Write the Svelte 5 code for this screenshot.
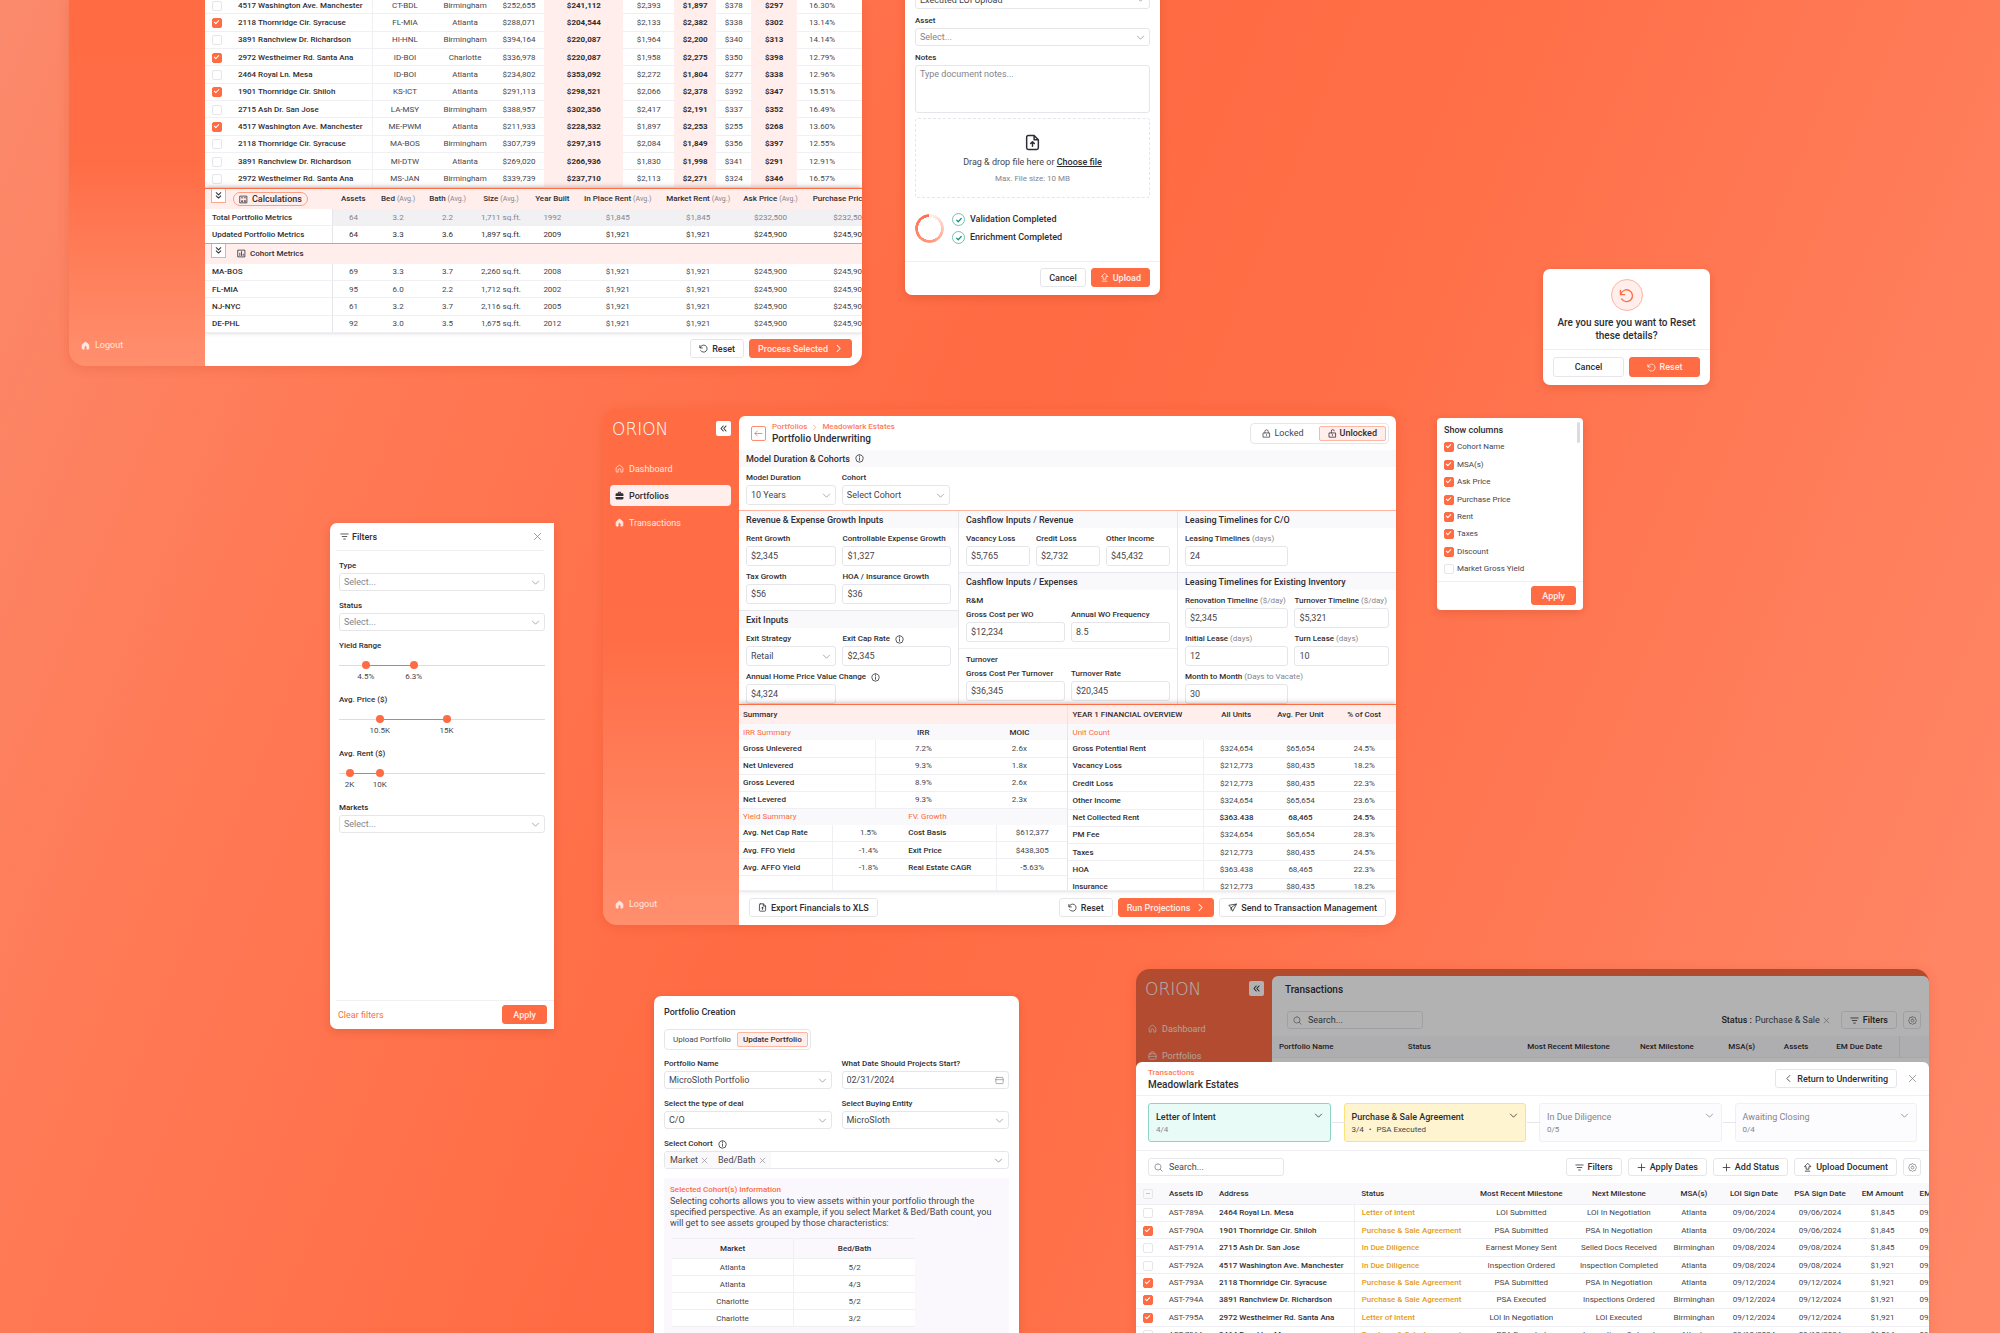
<script lang="ts">
  type Field = { label: string; value: string; hint?: string; select?: boolean; info?: boolean };

  const icons: Record<string, string> = {
    down: 'M2.5 5.5l5.5 5.5 5.5-5.5',
    right: 'M5.5 2.5L11 8l-5.5 5.5',
    left: 'M10.5 2.5L5 8l5.5 5.5',
    close: 'M2.5 2.5l11 11M13.5 2.5l-11 11',
    plus: 'M8 2v12M2 8h12',
    back: 'M14 8H2M6 3.5L1.5 8 6 12.5',
    reset: 'M1.5 2.5v4.5h4.5M2 6.5a6.3 6.3 0 1 1 .8 5.2',
    doubleDown: 'M4 3l4 4 4-4M4 8.5l4 4 4-4',
    doubleLeft: 'M7.5 3.5l-4 4.5 4 4.5M12.500 3.5l-4 4.5 4 4.5',
    filter: 'M1.5 3.5h13M4 8h8M6.5 12.5h3',
    info: 'M8 1.5a6.5 6.5 0 1 0 0 13a6.5 6.5 0 1 0 0-13M8 7.2v4M8 4.5v.6',
    lock: 'M2.5 7h11v7.5h-11zM5 7V4.5a3 3 0 0 1 6 0V7M8 10v1.5',
    unlock: 'M2.5 7h11v7.5h-11zM6 7V4a2.5 2.5 0 0 1 5-.8M8 10v1.5',
    home: 'M2 7.5Q2 6.5 3 5.8L7 2.5q1-.8 2 0l4 3.3q1 .7 1 1.7v5.5q0 1.5-1.5 1.5H10.5V11a2.5 2.5 0 0 0-5 0v3.5h-2Q2 14.5 2 13z',
    briefcase: 'M3 5h10q1.5 0 1.5 1.5V13q0 1.5-1.5 1.5H3q-1.5 0-1.5-1.5V6.5Q1.5 5 3 5zM5 5V3q0-1.5 1.5-1.5h3Q11 1.5 11 3v2M1.5 9.5h13',
    briefcaseSolid: 'M5 4V3q0-1.500 1.500-1.500h3Q11 1.500 11 3v1h2q2 0 2 2v3H1V6q0-2 2-2zM6.500 4h3V3h-3zM1 10.500h14V13q0 2-2 2H3q-2 0-2-2z',
    upload: 'M8 1L2.5 6.5h3V11h5V6.5h3zM4 14.5h8',
    file: 'M4 1.5h5.5L13.5 5.5V13q0 1.5-1.5 1.5H4q-1.5 0-1.5-1.5V3q0-1.5 1.5-1.5zM9.5 1.5v4h4M8 11.5V7.5M6.3 9L8 7.3 9.7 9',
    send: 'M14.5 2L1.5 4l4 4.5 2.5 5.5zM14.5 2l-9 6.500M5.5 8.5v4',
    calculator: 'M2 2h12v12H2zM4.5 5h2M9.500 5h2M4.500 11h2M5.500 10v2M9.500 10.200h2M9.500 12h2',
    chart: 'M2 2h12v12H2zM5 11.5V7.5M8 11.5V4.5M11 11.5V9',
    calendar: 'M3.5 2.5h9Q14.5 2.5 14.5 4.5v7q0 2-2 2h-9q-2 0-2-2v-7q0-2 2-2zM1.5 6.5h13',
    gear: 'M8 1l2 1.500 2.700 0 .8 2.500L15 8l-1.500 3-.8 2.500-2.700 0L8 15l-2-1.500-2.700 0-.8-2.500L1 8l1.500-3 .8-2.500 2.700 0zM8 5.500a2.500 2.500 0 1 0 0 5a2.500 2.500 0 1 0 0-5',
    search: 'M7 1.5a5.5 5.5 0 1 0 0 11a5.5 5.5 0 1 0 0-11M11 11l3.5 3.5',
    check: 'M3.5 8.5l3 3 6-6.5'
  };

  const assets = [
    ['4517 Washington Ave. Manchester', 'CT-BDL', 'Birmingham', '$252,655', '$241,112', '$2,393', '$1,897', '$378', '$297', '16.30%'],
    ['2118 Thornridge Cir. Syracuse', 'FL-MIA', 'Atlanta', '$288,071', '$204,544', '$2,133', '$2,382', '$338', '$302', '13.14%'],
    ['3891 Ranchview Dr. Richardson', 'HI-HNL', 'Birmingham', '$394,164', '$220,087', '$1,964', '$2,200', '$340', '$313', '14.14%'],
    ['2972 Westheimer Rd. Santa Ana', 'ID-BOI', 'Charlotte', '$336,978', '$220,087', '$1,958', '$2,275', '$350', '$398', '12.79%'],
    ['2464 Royal Ln. Mesa', 'ID-BOI', 'Atlanta', '$234,802', '$353,092', '$2,272', '$1,804', '$277', '$338', '12.96%'],
    ['1901 Thornridge Cir. Shiloh', 'KS-ICT', 'Atlanta', '$291,113', '$298,521', '$2,066', '$2,378', '$392', '$347', '15.51%'],
    ['2715 Ash Dr. San Jose', 'LA-MSY', 'Birmingham', '$388,957', '$302,356', '$2,417', '$2,191', '$337', '$352', '16.49%'],
    ['4517 Washington Ave. Manchester', 'ME-PWM', 'Atlanta', '$211,933', '$228,532', '$1,897', '$2,253', '$255', '$268', '13.60%'],
    ['2118 Thornridge Cir. Syracuse', 'MA-BOS', 'Birmingham', '$307,739', '$297,315', '$2,084', '$1,849', '$356', '$397', '12.55%'],
    ['3891 Ranchview Dr. Richardson', 'MI-DTW', 'Atlanta', '$269,020', '$266,936', '$1,830', '$1,998', '$341', '$291', '12.91%'],
    ['2972 Westheimer Rd. Santa Ana', 'MS-JAN', 'Birmingham', '$339,739', '$237,710', '$2,113', '$2,271', '$324', '$346', '16.57%']
  ];
  const selectedAssets = [1, 3, 5, 7];

  const metricColumns = [
    ['Assets', ''],
    ['Bed', '(Avg.)'],
    ['Bath', '(Avg.)'],
    ['Size', '(Avg.)'],
    ['Year Built', ''],
    ['In Place Rent', '(Avg.)'],
    ['Market Rent', '(Avg.)'],
    ['Ask Price', '(Avg.)'],
    ['Purchase Price', '(Avg.)']
  ];
  const cohortMetrics = [
    ['MA-BOS', '69', '3.3', '3.7', '2,260 sq.ft.', '2008', '$1,921', '$1,921', '$245,900', '$245,900'],
    ['FL-MIA', '95', '6.0', '2.2', '1,712 sq.ft.', '2002', '$1,921', '$1,921', '$245,900', '$245,900'],
    ['NJ-NYC', '61', '3.2', '3.7', '2,116 sq.ft.', '2005', '$1,921', '$1,921', '$245,900', '$245,900'],
    ['DE-PHL', '92', '3.0', '3.5', '1,675 sq.ft.', '2012', '$1,921', '$1,921', '$245,900', '$245,900']
  ];
  const totalMetrics = ['64', '3.2', '2.2', '1,711 sq.ft.', '1992', '$1,845', '$1,845', '$232,500', '$232,500'];
  const updatedMetrics = ['64', '3.3', '3.6', '1,897 sq.ft.', '2009', '$1,921', '$1,921', '$245,900', '$245,900'];

  const columnOptions = ['Cohort Name', 'MSA(s)', 'Ask Price', 'Purchase Price', 'Rent', 'Taxes', 'Discount', 'Market Gross Yield'];

  const ranges = [
    { label: 'Yield Range', from: 11.5, to: 35.7, fromLabel: '4.5%', toLabel: '6.3%' },
    { label: 'Avg. Price ($)', from: 18.6, to: 52.3, fromLabel: '10.5K', toLabel: '15K' },
    { label: 'Avg. Rent ($)', from: 3.3, to: 18.6, fromLabel: '2K', toLabel: '10K' }
  ];

  const growthFields: Field[] = [
    { label: 'Rent Growth', value: '$2,345' },
    { label: 'Controllable Expense Growth', value: '$1,327' },
    { label: 'Tax Growth', value: '$56' },
    { label: 'HOA / Insurance Growth', value: '$36' }
  ];
  const exitFields: Field[] = [
    { label: 'Exit Strategy', value: 'Retail', select: true },
    { label: 'Exit Cap Rate', value: '$2,345', info: true },
    { label: 'Annual Home Price Value Change', value: '$4,324', info: true }
  ];
  const revenueFields: Field[] = [
    { label: 'Vacancy Loss', value: '$5,765' },
    { label: 'Credit Loss', value: '$2,732' },
    { label: 'Other Income', value: '$45,432' }
  ];
  const rmFields: Field[] = [
    { label: 'Gross Cost per WO', value: '$12,234' },
    { label: 'Annual WO Frequency', value: '8.5' }
  ];
  const turnoverFields: Field[] = [
    { label: 'Gross Cost Per Turnover', value: '$36,345' },
    { label: 'Turnover Rate', value: '$20,345' }
  ];
  const inventoryFields: Field[] = [
    { label: 'Renovation Timeline', hint: '($/day)', value: '$2,345' },
    { label: 'Turnover Timeline', hint: '($/day)', value: '$5,321' },
    { label: 'Initial Lease', hint: '(days)', value: '12' },
    { label: 'Turn Lease', hint: '(days)', value: '10' },
    { label: 'Month to Month', hint: '(Days to Vacate)', value: '30' }
  ];

  const irrRows = [
    ['Gross Unlevered', '7.2%', '2.6x'],
    ['Net Unlevered', '9.3%', '1.8x'],
    ['Gross Levered', '8.9%', '2.6x'],
    ['Net Levered', '9.3%', '2.3x']
  ];
  const yieldRows = [
    ['Avg. Net Cap Rate', '1.5%', 'Cost Basis', '$612,377'],
    ['Avg. FFO Yield', '-1.4%', 'Exit Price', '$438,305'],
    ['Avg. AFFO Yield', '-1.8%', 'Real Estate CAGR', '-5.63%'],
    ['', '', '', '']
  ];
  const financials = [
    ['Gross Potential Rent', '$324,654', '$65,654', '24.5%'],
    ['Vacancy Loss', '$212,773', '$80,435', '18.2%'],
    ['Credit Loss', '$212,773', '$80,435', '22.3%'],
    ['Other Income', '$324,654', '$65,654', '23.6%'],
    ['Net Collected Rent', '$363.438', '68,465', '24.5%'],
    ['PM Fee', '$324,654', '$65,654', '28.3%'],
    ['Taxes', '$212,773', '$80,435', '24.5%'],
    ['HOA', '$363.438', '68,465', '22.3%'],
    ['Insurance', '$212,773', '$80,435', '18.2%']
  ];

  const cohortSample = [
    ['Atlanta', '5/2'],
    ['Atlanta', '4/3'],
    ['Charlotte', '5/2'],
    ['Charlotte', '3/2']
  ];

  const stages = [
    { name: 'Letter of Intent', progress: '4/4', note: '', tone: 'done' },
    { name: 'Purchase & Sale Agreement', progress: '3/4', note: 'PSA Executed', tone: 'current' },
    { name: 'In Due Diligence', progress: '0/5', note: '', tone: 'idle' },
    { name: 'Awaiting Closing', progress: '0/4', note: '', tone: 'idle' }
  ];
  const transactions = [
    ['AST-789A', '2464 Royal Ln. Mesa', 'Letter of Intent', 'LOI Submitted', 'LOI In Negotiation', 'Atlanta', '09/06/2024', '09/06/2024', '$1,845', '09/06/2024'],
    ['AST-790A', '1901 Thornridge Cir. Shiloh', 'Purchase & Sale Agreement', 'PSA Submitted', 'PSA In Negotiation', 'Atlanta', '09/06/2024', '09/06/2024', '$1,845', '09/06/2024'],
    ['AST-791A', '2715 Ash Dr. San Jose', 'In Due Diligence', 'Earnest Money Sent', 'Selled Docs Received', 'Birminghan', '09/08/2024', '09/08/2024', '$1,845', '09/08/2024'],
    ['AST-792A', '4517 Washington Ave. Manchester', 'In Due Diligence', 'Inspection Ordered', 'Inspection Completed', 'Atlanta', '09/08/2024', '09/08/2024', '$1,921', '09/08/2024'],
    ['AST-793A', '2118 Thornridge Cir. Syracuse', 'Purchase & Sale Agreement', 'PSA Submitted', 'PSA In Negotiation', 'Atlanta', '09/12/2024', '09/12/2024', '$1,921', '09/12/2024'],
    ['AST-794A', '3891 Ranchview Dr. Richardson', 'Purchase & Sale Agreement', 'PSA Executed', 'Inspections Ordered', 'Birminghan', '09/12/2024', '09/12/2024', '$1,921', '09/12/2024'],
    ['AST-795A', '2972 Westheimer Rd. Santa Ana', 'Letter of Intent', 'LOI In Negotiation', 'LOI Executed', 'Birminghan', '09/12/2024', '09/12/2024', '$1,921', '09/12/2024'],
    ['AST-796A', '2464 Royal Ln. Mesa', 'Purchase & Sale Agreement', 'PSA Executed', 'Inspections Ordered', 'Atlanta', '09/12/2024', '09/12/2024', '$1,564', '09/12/2024']
  ];
  const selectedTransactions = [1, 4, 5, 6];

  function slug(text: string) {
    return text.toLowerCase().replace(/[^a-z0-9]+/g, '-');
  }
</script>

{#snippet icon(name: string, kind: string = '')}
  <svg class="icon {kind}" viewBox="0 0 16 16" aria-hidden="true"><path d={icons[name]} /></svg>
{/snippet}

{#snippet cols(widths: number[])}
  {@const total = widths.reduce((a, b) => a + b, 0)}
  <colgroup>
    {#each widths as w}<col style="width: {(w / total) * 100}%" />{/each}
  </colgroup>
{/snippet}

{#snippet select(id: string, label: string, value: string, muted: boolean = false)}
  <div class="field">
    <label for={id}>{label}</label>
    <div class="control">
      <select {id} class:muted><option>{value}</option></select>
      {@render icon('down', 'caret')}
    </div>
  </div>
{/snippet}

{#snippet fields(prefix: string, list: Field[])}
  {#each list as f}
    {@const id = prefix + '-' + slug(f.label)}
    {#if f.select}
      {@render select(id, f.label, f.value)}
    {:else}
      <div class="field">
        <label for={id}>{f.label}{#if f.hint}<small>{f.hint}</small>{/if}{#if f.info}{@render icon('info', 'gap')}{/if}</label>
        <input {id} type="text" value={f.value} />
      </div>
    {/if}
  {/each}
{/snippet}

{#snippet sidebar(active: string)}
  <aside class="sidebar">
    <div class="brand">
      <span class="logo">ORION</span>
      <button class="collapse" aria-label="Collapse menu">{@render icon('doubleLeft')}</button>
    </div>
    <nav>
      <a href="#dashboard">{@render icon('home')}Dashboard</a>
      <a href="#portfolios" class:active={active === 'portfolios'}>
        {#if active === 'portfolios'}{@render icon('briefcaseSolid', 'solid')}{:else}{@render icon('briefcase')}{/if}Portfolios
      </a>
      <a href="#transactions">{@render icon('home', 'filled')}Transactions</a>
    </nav>
    <a class="logout" href="#logout">{@render icon('home', 'filled')}Logout</a>
  </aside>
{/snippet}

<main class="canvas">
  <section class="app portfolio-app">
    <aside class="sidebar">
      <a class="logout" href="#logout">{@render icon('home', 'filled')}Logout</a>
    </aside>
    <div class="panel">
      <table class="assets">
        {@render cols([25, 143, 64, 57, 51, 79, 51, 42, 35, 46, 65])}
        <tbody>
          {#each assets as row, i}
            <tr>
              <td><input type="checkbox" aria-label="Select {row[0]}" checked={selectedAssets.includes(i)} /></td>
              {#each row as cell, c}
                <td class:name={c === 0} class:tint={c === 4 || c === 6 || c === 8} class:yield={c === 9}>{cell}</td>
              {/each}
            </tr>
          {/each}
        </tbody>
      </table>
      <div class="metrics">
        <table>
          {@render cols([128, 41, 49, 50, 57, 46, 85, 76, 69, 90])}
          <thead>
            <tr class="group">
              <th>
                <div class="group-title">
                  <button class="fold" aria-label="Collapse calculations">{@render icon('doubleDown')}</button>
                  <span class="pill">{@render icon('calculator')}Calculations</span>
                </div>
              </th>
              {#each metricColumns as [title, hint]}
                <th>{title} <small>{hint}</small></th>
              {/each}
            </tr>
          </thead>
          <tbody>
            <tr class="total">
              <th scope="row">Total Portfolio Metrics</th>
              {#each totalMetrics as cell}<td>{cell}</td>{/each}
            </tr>
            <tr class="updated">
              <th scope="row">Updated Portfolio Metrics</th>
              {#each updatedMetrics as cell}<td>{cell}</td>{/each}
            </tr>
            <tr class="group cohort">
              <th>
                <div class="group-title">
                  <button class="fold" aria-label="Collapse cohorts">{@render icon('doubleDown')}</button>
                  <span class="pill plain">{@render icon('chart')}Cohort Metrics</span>
                </div>
              </th>
              {#each metricColumns as _}<td></td>{/each}
            </tr>
            {#each cohortMetrics as row}
              <tr>
                <th scope="row">{row[0]}</th>
                {#each row.slice(1) as cell}<td>{cell}</td>{/each}
              </tr>
            {/each}
          </tbody>
        </table>
      </div>
      <footer class="actions">
        <button class="btn">{@render icon('reset')}Reset</button>
        <button class="btn primary">Process Selected{@render icon('right', 'trail')}</button>
      </footer>
    </div>
  </section>

  <section class="card upload-card">
    <div class="upload-body">
      <div class="control">
        <select aria-label="Document type"><option>Executed LOI Upload</option></select>
        {@render icon('down', 'caret')}
      </div>
      {@render select('upload-asset', 'Asset', 'Select...', true)}
      <div class="field">
        <label for="upload-notes">Notes</label>
        <textarea id="upload-notes" placeholder="Type document notes..."></textarea>
      </div>
      <div class="dropzone">
        {@render icon('file')}
        <p>Drag &amp; drop file here or <a href="#choose">Choose file</a></p>
        <p class="limit">Max. File size: 10 MB</p>
      </div>
      <div class="progress">
        <span class="spinner"></span>
        <ul>
          <li><span class="tick">{@render icon('check')}</span>Validation Completed</li>
          <li><span class="tick">{@render icon('check')}</span>Enrichment Completed</li>
        </ul>
      </div>
    </div>
    <footer class="actions ruled">
      <button class="btn">Cancel</button>
      <button class="btn primary">{@render icon('upload')}Upload</button>
    </footer>
  </section>

  <section class="card reset-card">
    <div class="reset-body">
      <span class="badge">{@render icon('reset')}</span>
      <p>Are you sure you want to Reset these details?</p>
    </div>
    <footer class="actions ruled">
      <button class="btn">Cancel</button>
      <button class="btn primary">{@render icon('reset')}Reset</button>
    </footer>
  </section>

  <section class="card columns-card">
    <div class="columns-body">
      <h2>Show columns</h2>
      {#each columnOptions as option, i}
        <label><input type="checkbox" checked={i < 7} />{option}</label>
      {/each}
      <span class="scroll-thumb"></span>
    </div>
    <footer class="actions">
      <button class="btn primary">Apply</button>
    </footer>
  </section>

  <section class="card filters-card">
    <header>
      <h2>{@render icon('filter')}Filters</h2>
      <button class="ghost" aria-label="Close filters">{@render icon('close')}</button>
    </header>
    <div class="filters-body">
      {@render select('filter-type', 'Type', 'Select...', true)}
      {@render select('filter-status', 'Status', 'Select...', true)}
      {#each ranges as range}
        <div class="range">
          <span class="range-label">{range.label}</span>
          <div class="slider">
            <span class="track"></span>
            <span class="scale">
              <span class="fill" style="left: {range.from}%; width: {range.to - range.from}%"></span>
              <output style="left: {range.from}%">{range.fromLabel}</output>
              <output style="left: {range.to}%">{range.toLabel}</output>
            </span>
            <input type="range" min="0" max="100" step="0.1" value={range.from} aria-label="{range.label} minimum" />
            <input type="range" min="0" max="100" step="0.1" value={range.to} aria-label="{range.label} maximum" />
          </div>
        </div>
      {/each}
      {@render select('filter-markets', 'Markets', 'Select...', true)}
    </div>
    <footer class="actions ruled">
      <button class="link">Clear filters</button>
      <button class="btn primary">Apply</button>
    </footer>
  </section>

  <section class="app underwriting-app">
    {@render sidebar('portfolios')}
    <div class="panel">
      <header class="page-head">
        <button class="back" aria-label="Back">{@render icon('back')}</button>
        <div class="titles">
          <p class="crumbs"><a href="#portfolios">Portfolios</a>{@render icon('right')}<a href="#meadowlark">Meadowlark Estates</a></p>
          <h1>Portfolio Underwriting</h1>
        </div>
        <div class="segmented">
          <button>{@render icon('lock')}Locked</button>
          <button class="on">{@render icon('unlock')}Unlocked</button>
        </div>
      </header>
      <h3 class="strip">Model Duration &amp; Cohorts {@render icon('info', 'gap')}</h3>
      <div class="grid model">
        {@render select('model-duration', 'Model Duration', '10 Years')}
        {@render select('model-cohort', 'Cohort', 'Select Cohort')}
      </div>
      <div class="inputs">
        <div class="inputs-col">
          <h3 class="strip">Revenue &amp; Expense Growth Inputs</h3>
          <div class="grid wide">{@render fields('growth', growthFields)}</div>
          <h3 class="strip ruled">Exit Inputs</h3>
          <div class="grid wide">{@render fields('exit', exitFields)}</div>
        </div>
        <div class="inputs-col">
          <h3 class="strip">Cashflow Inputs / Revenue</h3>
          <div class="grid thirds">{@render fields('revenue', revenueFields)}</div>
          <h3 class="strip ruled">Cashflow Inputs / Expenses</h3>
          <div class="grid halves">
            <h4>R&amp;M</h4>
            {@render fields('rm', rmFields)}
          </div>
          <div class="grid halves ruled">
            <h4>Turnover</h4>
            {@render fields('turnover', turnoverFields)}
          </div>
        </div>
        <div class="inputs-col">
          <h3 class="strip">Leasing Timelines for C/O</h3>
          <div class="grid lease">{@render fields('co', [{ label: 'Leasing Timelines', hint: '(days)', value: '24' }])}</div>
          <h3 class="strip ruled">Leasing Timelines for Existing Inventory</h3>
          <div class="grid lease">{@render fields('inventory', inventoryFields)}</div>
        </div>
      </div>
      <div class="summary">
        <div class="summary-left">
          <table>
            {@render cols([136, 96, 96])}
            <thead>
              <tr class="bar"><th colspan="3">Summary</th></tr>
              <tr class="sub"><th class="accent">IRR Summary</th><th>IRR</th><th>MOIC</th></tr>
            </thead>
            <tbody>
              {#each irrRows as [name, irr, moic]}
                <tr><th scope="row">{name}</th><td>{irr}</td><td>{moic}</td></tr>
              {/each}
            </tbody>
          </table>
          <table class="yields">
            {@render cols([93, 72, 92, 71])}
            <thead>
              <tr class="sub"><th class="accent" colspan="2">Yield Summary</th><th class="accent" colspan="2">FV. Growth</th></tr>
            </thead>
            <tbody>
              {#each yieldRows as [a, av, b, bv]}
                <tr><th scope="row">{a}</th><td>{av}</td><th scope="row">{b}</th><td>{bv}</td></tr>
              {/each}
            </tbody>
          </table>
        </div>
        <div class="summary-right">
          <table>
            {@render cols([136, 65, 64, 64])}
            <thead>
              <tr class="bar"><th>YEAR 1 FINANCIAL OVERVIEW</th><th>All Units</th><th>Avg. Per Unit</th><th>% of Cost</th></tr>
              <tr class="sub"><th class="accent">Unit Count</th><th></th><th></th><th></th></tr>
            </thead>
            <tbody>
              {#each financials as [name, all, unit, cost], i}
                <tr class:strong={i === 4}><th scope="row">{name}</th><td>{all}</td><td>{unit}</td><td>{cost}</td></tr>
              {/each}
            </tbody>
          </table>
        </div>
      </div>
      <footer class="actions">
        <button class="btn push">{@render icon('file')}Export Financials to XLS</button>
        <button class="btn">{@render icon('reset')}Reset</button>
        <button class="btn primary">Run Projections{@render icon('right', 'trail')}</button>
        <button class="btn">{@render icon('send')}Send to Transaction Management</button>
      </footer>
    </div>
  </section>

  <section class="card creation-card">
    <h2>Portfolio Creation</h2>
    <div class="segmented">
      <button>Upload Portfolio</button>
      <button class="on">Update Portfolio</button>
    </div>
    <div class="creation-grid">
      {@render select('creation-name', 'Portfolio Name', 'MicroSloth Portfolio')}
      <div class="field">
        <label for="creation-date">What Date Should Projects Start?</label>
        <div class="control">
          <input id="creation-date" type="text" value="02/31/2024" />
          {@render icon('calendar', 'caret')}
        </div>
      </div>
      {@render select('creation-deal', 'Select the type of deal', 'C/O')}
      {@render select('creation-entity', 'Select Buying Entity', 'MicroSloth')}
    </div>
    <div class="field">
      <label for="creation-cohort">Select Cohort{@render icon('info', 'gap')}</label>
      <div class="tags">
        <span class="tag">Market<button class="ghost" aria-label="Remove Market">{@render icon('close')}</button></span>
        <span class="tag">Bed/Bath<button class="ghost" aria-label="Remove Bed/Bath">{@render icon('close')}</button></span>
        <input id="creation-cohort" type="text" />
        {@render icon('down')}
      </div>
    </div>
    <div class="note">
      <h3>Selected Cohort(s) Information</h3>
      <p>
        Selecting cohorts allows you to view assets within your portfolio through the specified perspective. As an
        example, if you select Market &amp; Bed/Bath count, you will get to see assets grouped by those characteristics:
      </p>
      <table>
        <thead><tr><th>Market</th><th>Bed/Bath</th></tr></thead>
        <tbody>
          {#each cohortSample as [market, beds]}
            <tr><td>{market}</td><td>{beds}</td></tr>
          {/each}
        </tbody>
      </table>
    </div>
  </section>

  <section class="app transactions-app">
    {@render sidebar('transactions')}
    <div class="panel">
      <h1>Transactions</h1>
      <div class="toolbar">
        <label class="search">{@render icon('search')}<input type="search" placeholder="Search..." aria-label="Search transactions" /></label>
        <span class="chip"><b>Status :</b> Purchase &amp; Sale<button class="ghost" aria-label="Remove status filter">{@render icon('close')}</button></span>
        <button class="btn">{@render icon('filter')}Filters</button>
        <button class="btn square" aria-label="Settings">{@render icon('gear')}</button>
      </div>
      <table>
        {@render cols([129, 114, 108, 89, 61, 48, 79, 30])}
        <thead>
          <tr>
            <th class="left">Portfolio Name</th>
            <th class="left">Status</th>
            <th>Most Recent Milestone</th>
            <th>Next Milestone</th>
            <th>MSA(s)</th>
            <th>Assets</th>
            <th>EM Due Date</th>
            <th class="edge"></th>
          </tr>
        </thead>
      </table>
    </div>
    <div class="scrim"></div>
    <div class="sheet">
      <header>
        <div class="titles">
          <p class="crumbs"><a href="#transactions">Transactions</a></p>
          <h1>Meadowlark Estates</h1>
        </div>
        <button class="btn">{@render icon('left')}Return to Underwriting</button>
        <button class="ghost" aria-label="Close">{@render icon('close')}</button>
      </header>
      <div class="stages">
        {#each stages as stage}
          <button class="stage {stage.tone}">
            <span class="stage-name">{stage.name}{@render icon('down')}</span>
            <span class="stage-sub">{stage.progress}{#if stage.note}<i>•</i>{stage.note}{/if}</span>
          </button>
        {/each}
      </div>
      <div class="toolbar">
        <label class="search">{@render icon('search')}<input type="search" placeholder="Search..." aria-label="Search assets" /></label>
        <button class="btn">{@render icon('filter')}Filters</button>
        <button class="btn">{@render icon('plus')}Apply Dates</button>
        <button class="btn">{@render icon('plus')}Add Status</button>
        <button class="btn">{@render icon('upload')}Upload Document</button>
        <button class="btn square" aria-label="Settings">{@render icon('gear')}</button>
      </div>
      <table>
        {@render cols([24, 52, 142, 118, 98, 97, 53, 67, 65, 60, 48])}
        <thead>
          <tr>
            <th><input type="checkbox" class="mixed" aria-label="Select all" /></th>
            <th>Assets ID</th>
            <th class="left">Address</th>
            <th class="left">Status</th>
            <th>Most Recent Milestone</th>
            <th>Next Milestone</th>
            <th>MSA(s)</th>
            <th>LOI Sign Date</th>
            <th>PSA Sign Date</th>
            <th>EM Amount</th>
            <th class="left">EM Due</th>
          </tr>
        </thead>
        <tbody>
          {#each transactions as row, i}
            <tr>
              <td><input type="checkbox" aria-label="Select {row[0]}" checked={selectedTransactions.includes(i)} /></td>
              {#each row as cell, c}
                <td class:address={c === 1} class:status={c === 2} class:left={c === 9}>{cell}</td>
              {/each}
            </tr>
          {/each}
        </tbody>
      </table>
    </div>
  </section>
</main>

<style>
  :global(body) {
    margin: 0;
  }

  .canvas {
    --orange: #ff6b42;
    --ink: #2e2d33;
    --text: #46454c;
    --muted: #85848b;
    --line: #e6e5ea;
    --rule: #f0eff3;
    --wash: #f9f8fb;
    --blush: #ffeeeb;
    position: relative;
    min-height: 100vh;
    overflow: hidden;
    background: linear-gradient(112deg, #fb8a6c 0%, #ff7b57 18%, #ff6b43 45%, #ff6f48 60%, #ff7d5a 80%, #ff8a6a 100%);
    color: var(--ink);
    font-family: Roboto, 'Liberation Sans', Arial, sans-serif;
    font-size: 8px;
    line-height: 12px;
  }

  .canvas *,
  .canvas *::before,
  .canvas *::after {
    box-sizing: border-box;
  }

  h1,
  h2,
  h3,
  h4,
  p,
  ul {
    margin: 0;
    padding: 0;
    font-size: inherit;
    font-weight: 500;
  }

  a {
    color: inherit;
    text-decoration: none;
  }

  button,
  input,
  select,
  textarea {
    margin: 0;
    border: 0;
    padding: 0;
    background: none;
    color: inherit;
    font: inherit;
  }

  small {
    color: var(--muted);
    font-size: 8px;
    font-weight: 400;
  }

  .icon {
    flex: none;
    width: 9px;
    height: 9px;
    fill: none;
    stroke: currentColor;
    stroke-width: 1.4;
    stroke-linecap: round;
    stroke-linejoin: round;
  }

  .icon.filled,
  .icon.solid {
    fill: currentColor;
  }

  .icon.solid {
    stroke: none;
    fill-rule: evenodd;
  }

  .icon.gap {
    margin-left: 5px;
  }

  .icon.trail {
    margin-left: 2px;
    stroke-width: 1.8;
  }

  /* Windows */
  .app,
  .card {
    position: absolute;
    overflow: hidden;
  }

  .app {
    display: flex;
    width: 39.65%;
    border-radius: 14px;
    background: var(--orange);
    box-shadow: 0 2px 12px rgb(190 50 10 / 18%);
  }

  .card {
    border-radius: 7px;
    background: #fff;
    box-shadow: 0 3px 10px rgb(150 40 10 / 20%);
  }

  .panel {
    flex: 1;
    min-width: 0;
    overflow: hidden;
    background: #fff;
  }

  /* Sidebar */
  .sidebar {
    display: flex;
    flex-direction: column;
    width: 17.15%;
    padding: 12px 8px 15px;
    background: linear-gradient(180deg, #ff6c44 0%, #ff6d46 45%, #ff8f6e 100%);
    color: #ffe6df;
    font-size: 9px;
  }

  .brand {
    display: flex;
    align-items: center;
    justify-content: space-between;
    height: 15px;
    padding-left: 1px;
  }

  .logo {
    color: #fff;
    font-family: 'DejaVu Sans Light', 'DejaVu Sans', sans-serif;
    font-size: 17px;
    font-weight: 200;
  }

  .collapse {
    display: grid;
    place-items: center;
    width: 15px;
    height: 15px;
    border-radius: 2px;
    background: #fff;
    color: var(--ink);
  }

  .collapse .icon {
    stroke-width: 1.8;
  }

  nav {
    display: flex;
    flex-direction: column;
    gap: 6px;
    margin-top: 22px;
  }

  nav a,
  .logout {
    display: flex;
    align-items: center;
    gap: 5px;
    height: 21px;
    padding-left: 4px;
  }

  nav a.active {
    margin-left: -1px;
    padding-left: 5px;
    border-radius: 4px;
    background: var(--blush);
    color: var(--ink);
    font-weight: 500;
  }

  .logout {
    height: 12px;
    margin-top: auto;
  }

  /* Buttons */
  .btn {
    display: flex;
    align-items: center;
    justify-content: center;
    gap: 4px;
    height: 19px;
    padding: 0 8px;
    border: 1px solid var(--line);
    border-radius: 3px;
    background: #fff;
    font-size: 9px;
    font-weight: 500;
    white-space: nowrap;
  }

  .btn.primary {
    border-color: var(--orange);
    background: var(--orange);
    color: #ffece6;
  }

  .btn.square {
    width: 18px;
    padding: 0;
    color: var(--muted);
  }

  .ghost {
    display: grid;
    place-items: center;
    color: var(--muted);
  }

  .actions {
    display: flex;
    justify-content: flex-end;
    gap: 5px;
    padding: 6px 10px 8px;
  }

  .actions.ruled {
    border-top: 1px solid var(--rule);
  }

  .push {
    margin-right: auto;
  }

  .segmented {
    display: inline-flex;
    padding: 2px;
    border: 1px solid var(--line);
    border-radius: 4px;
  }

  .segmented button {
    display: flex;
    align-items: center;
    gap: 3px;
    height: 15px;
    padding: 0 5px;
    border: 1px solid transparent;
    border-radius: 2px;
    color: var(--text);
  }

  .segmented .on {
    border-color: #ffb5a2;
    background: var(--blush);
    color: var(--ink);
    font-weight: 500;
  }

  /* Form controls */
  .field {
    min-width: 0;
  }

  .field label {
    display: flex;
    align-items: center;
    height: 14px;
    font-weight: 500;
    white-space: nowrap;
  }

  .field label small {
    margin-left: 2px;
  }

  .control {
    display: grid;
    align-items: center;
  }

  .control > * {
    grid-area: 1 / 1;
  }

  .caret {
    justify-self: end;
    margin-right: 5px;
    color: var(--muted);
    stroke-width: 1.2;
    pointer-events: none;
  }

  select,
  input[type='text'],
  textarea {
    display: block;
    width: 100%;
    height: 20px;
    padding: 0 4px;
    border: 1px solid var(--line);
    border-radius: 3px;
    appearance: none;
    color: var(--text);
    font-size: 9px;
  }

  select.muted,
  textarea::placeholder {
    color: var(--muted);
  }

  input[type='checkbox'] {
    display: block;
    position: relative;
    width: 10px;
    height: 10px;
    border: 1px solid var(--line);
    border-radius: 2px;
    appearance: none;
  }

  input[type='checkbox']:checked {
    border-color: var(--orange);
    background: var(--orange);
  }

  input[type='checkbox']:checked::after {
    content: '';
    position: absolute;
    left: 1px;
    top: 1px;
    width: 5px;
    height: 3px;
    border: solid #fff;
    border-width: 0 0 1px 1px;
    rotate: -45deg;
  }

  input.mixed::after {
    content: '';
    position: absolute;
    left: 2px;
    top: 3px;
    width: 4px;
    height: 1px;
    background: #c4c3c9;
  }

  /* Tables */
  table {
    width: 100%;
    border-collapse: collapse;
    table-layout: fixed;
  }

  th,
  td {
    padding: 1px 0 0;
    border-bottom: 1px solid var(--rule);
    text-align: center;
    white-space: nowrap;
  }

  th {
    font-weight: 500;
  }

  td {
    color: var(--text);
  }

  td input[type='checkbox'],
  th input[type='checkbox'] {
    margin: 0 auto;
  }

  /* Portfolio window */
  .portfolio-app {
    left: 3.45%;
    top: -3px;
    border-radius: 0 0 14px 16px;
  }

  .assets {
    height: 191px;
  }

  .assets .name {
    padding-left: 8px;
    border-right: 1px solid var(--rule);
    color: var(--ink);
    font-weight: 500;
    text-align: left;
  }

  .assets .tint {
    border-color: var(--blush);
    background: var(--blush);
    color: var(--ink);
    font-weight: 700;
  }

  .assets .yield {
    padding-left: 12px;
    text-align: left;
  }

  .metrics {
    position: relative;
    border-top: 1px solid var(--orange);
    box-shadow: 0 -1px 5px rgb(60 20 20 / 30%);
  }

  .metrics table {
    width: 105%;
    height: 144px;
  }

  .metrics th[scope='row'] {
    padding-left: 7px;
    border-right: 1px solid var(--line);
    text-align: left;
  }

  .metrics .group {
    height: 20px;
    background: var(--blush);
  }

  .metrics .group th,
  .metrics .group td {
    padding-top: 0;
    border-bottom: 0;
  }

  .metrics .total td {
    background: #f1f0f3;
    color: var(--muted);
  }

  .metrics .updated th,
  .metrics .updated td {
    border-bottom: 1px solid #ff8d70;
    color: var(--ink);
  }

  .metrics small {
    font-size: 7px;
  }

  .group-title {
    display: flex;
    align-items: flex-start;
    gap: 7px;
    height: 20px;
    padding-left: 6px;
  }

  .fold {
    display: grid;
    place-items: center;
    width: 15px;
    height: 14px;
    border: 1px solid #ffa890;
    border-top: 0;
    background: #fff;
  }

  .fold .icon {
    stroke-width: 1.8;
  }

  .pill {
    display: flex;
    align-items: center;
    gap: 4px;
    height: 14px;
    margin-top: 3px;
    padding: 0 5px;
    border: 1px solid #ff9d82;
    border-radius: 7px;
    font-size: 9px;
  }

  .pill.plain {
    padding: 0 3px;
    border-color: transparent;
    font-size: 8px;
  }

  /* Upload dialog */
  .upload-card {
    left: 45.25%;
    top: -10px;
    width: 12.75%;
  }

  .upload-body {
    display: flex;
    flex-direction: column;
    gap: 5px;
    padding: 0 10px 17px;
  }

  .upload-body select {
    height: 19px;
  }

  .upload-body .field select {
    height: 18px;
  }

  .upload-body textarea {
    height: 48px;
    padding: 2px 4px;
    resize: none;
  }

  .dropzone {
    display: flex;
    flex-direction: column;
    align-items: center;
    gap: 5px;
    height: 80px;
    padding-top: 15px;
    border: 1px dashed var(--line);
    border-radius: 3px;
    color: var(--text);
    font-size: 9px;
  }

  .dropzone .icon {
    width: 17px;
    height: 17px;
    color: var(--ink);
  }

  .dropzone p {
    font-weight: 400;
  }

  .dropzone a {
    color: var(--ink);
    font-weight: 500;
    text-decoration: underline;
  }

  .dropzone .limit {
    color: var(--muted);
    font-size: 8px;
  }

  .progress {
    display: flex;
    align-items: center;
    gap: 8px;
    margin-top: 10px;
  }

  .spinner {
    width: 29px;
    height: 29px;
    border-radius: 50%;
    background: conic-gradient(#fff4f1, #ff9d84 45%, #ff6b4a);
    mask: radial-gradient(closest-side, transparent 78%, #000 80%);
  }

  .progress ul {
    display: flex;
    flex-direction: column;
    gap: 5px;
    list-style: none;
    font-size: 9px;
    font-weight: 500;
    line-height: 13px;
  }

  .progress li {
    display: flex;
    gap: 5px;
  }

  .tick {
    display: grid;
    place-items: center;
    width: 13px;
    height: 13px;
    border: 1px solid #6cc5b0;
    border-radius: 50%;
    color: #10947a;
  }

  .tick .icon {
    width: 8px;
    height: 8px;
    stroke-width: 2.4;
  }

  /* Reset dialog */
  .reset-card {
    left: 77.15%;
    top: 269px;
    width: 8.35%;
  }

  .reset-body {
    display: flex;
    flex-direction: column;
    align-items: center;
    gap: 5px;
    padding: 10px 10px 7px;
    font-size: 10px;
    line-height: 13px;
    text-align: center;
  }

  .badge {
    display: grid;
    place-items: center;
    width: 32px;
    height: 32px;
    border: 1px solid #ffb5a2;
    border-radius: 50%;
    background: var(--blush);
    color: var(--orange);
  }

  .badge .icon {
    width: 15px;
    height: 15px;
  }

  .reset-card .btn {
    flex: 1;
    height: 20px;
  }

  .reset-card .actions {
    padding-top: 7px;
  }

  /* Column chooser */
  .columns-card {
    left: 71.85%;
    top: 418px;
    width: 7.3%;
    border-radius: 4px;
  }

  .columns-body {
    position: relative;
    display: flex;
    flex-direction: column;
    justify-content: space-between;
    min-height: 164px;
    padding: 6px 7px;
    border-bottom: 1px solid var(--rule);
  }

  .columns-body h2 {
    font-size: 9px;
  }

  .columns-body label {
    display: flex;
    align-items: center;
    gap: 3px;
    color: var(--text);
  }

  .scroll-thumb {
    position: absolute;
    top: 4px;
    right: 3px;
    width: 3px;
    height: 21px;
    border-radius: 2px;
    background: #dcdbe1;
  }

  .columns-card .actions {
    padding: 4px 7px 5px;
  }

  /* Filters drawer */
  .filters-card {
    display: flex;
    flex-direction: column;
    left: 16.5%;
    top: 523px;
    width: 11.2%;
    min-height: 506px;
    border-radius: 7px 0 0 7px;
  }

  .filters-card header {
    display: flex;
    align-items: center;
    justify-content: space-between;
    height: 28px;
    margin: 0 10px 0 6px;
    padding: 0 2px 0 4px;
    border-bottom: 1px solid var(--rule);
  }

  .filters-card h2 {
    display: flex;
    align-items: center;
    gap: 3px;
    font-size: 9px;
  }

  .filters-body {
    display: flex;
    flex: 1;
    flex-direction: column;
    gap: 8px;
    padding: 8px 9px;
  }

  .filters-body select {
    height: 18px;
  }

  .range {
    height: 46px;
  }

  .range-label {
    display: block;
    height: 14px;
    font-weight: 500;
    line-height: 14px;
  }

  .slider {
    position: relative;
    height: 20px;
    margin-top: 4px;
  }

  .slider input,
  .track {
    position: absolute;
    top: 8px;
    left: 0;
    width: 100%;
  }

  .track {
    height: 1px;
    background: #dddce1;
  }

  .scale {
    position: absolute;
    top: 8px;
    right: 4px;
    left: 4px;
  }

  .fill {
    position: absolute;
    height: 1px;
    background: var(--orange);
  }

  .slider output {
    position: absolute;
    top: 6px;
    translate: -50% 0;
    color: var(--text);
  }

  .slider input {
    top: 4px;
    height: 8px;
    appearance: none;
    pointer-events: none;
  }

  .slider input::-webkit-slider-thumb {
    width: 8px;
    height: 8px;
    border-radius: 50%;
    appearance: none;
    background: var(--orange);
    pointer-events: auto;
  }

  .filters-card .actions {
    justify-content: space-between;
    margin-left: 6px;
    padding: 4px 7px 5px 2px;
  }

  .filters-card .btn,
  .columns-card .btn {
    padding: 0 10px;
  }

  .link {
    color: var(--orange);
    font-size: 9px;
  }

  /* Underwriting window */
  .underwriting-app {
    left: 30.15%;
    top: 409px;
  }

  .underwriting-app .panel {
    margin-top: 7px;
    border-radius: 6px 6px 0 0;
  }

  .page-head {
    display: flex;
    align-items: center;
    height: 34px;
    padding: 0 7px 0 12px;
  }

  .back {
    display: grid;
    place-items: center;
    width: 15px;
    height: 15px;
    margin-right: 6px;
    border: 1px solid #ff8d70;
    border-radius: 2px;
    color: var(--orange);
  }

  .titles {
    flex: 1;
  }

  .titles h1 {
    font-size: 10px;
  }

  .crumbs {
    display: flex;
    align-items: center;
    gap: 4px;
    color: #ff7d5b;
  }

  .crumbs .icon {
    width: 7px;
    height: 7px;
  }

  .page-head .segmented button {
    padding: 0 8px;
  }

  .page-head .segmented button + button {
    margin-left: 6px;
  }

  .page-head .segmented button {
    font-size: 9px;
  }

  .strip {
    display: flex;
    align-items: center;
    height: 17px;
    padding-left: 7px;
    background: var(--wash);
    font-size: 9px;
  }

  .strip.ruled {
    height: 18px;
    border-top: 1px solid var(--line);
  }

  .grid {
    display: grid;
    column-gap: 6px;
    row-gap: 4px;
    padding: 4px 7px 6px;
  }

  .grid.model {
    grid-template-columns: 90fr 108fr 434fr;
    padding-bottom: 5px;
  }

  .grid.wide {
    grid-template-columns: 90fr 108fr;
  }

  .grid.thirds {
    grid-template-columns: repeat(3, 1fr);
  }

  .grid.halves {
    grid-template-columns: 1fr 1fr;
    row-gap: 0;
  }

  .grid.lease {
    grid-template-columns: 104fr 95fr;
  }

  .grid.ruled {
    border-top: 1px solid var(--rule);
  }

  .grid h4 {
    grid-column: 1 / -1;
    height: 14px;
    line-height: 14px;
  }

  .inputs {
    display: grid;
    grid-template-columns: repeat(3, 1fr);
    max-height: 194px;
    overflow: hidden;
    border-top: 1px solid #ffb49f;
  }

  .inputs-col + .inputs-col {
    border-left: 1px solid var(--line);
  }

  .summary {
    position: relative;
    display: grid;
    grid-template-columns: 1fr 1fr;
    height: 187px;
    border-top: 1px solid var(--orange);
    border-bottom: 1px solid var(--rule);
    box-shadow: 0 -1px 5px rgb(60 20 20 / 30%);
  }

  .summary-left,
  .summary-right {
    min-height: 0;
    overflow: hidden;
  }

  .summary-right {
    border-left: 1px solid var(--line);
  }

  .summary tr {
    height: 17px;
  }

  .summary .bar {
    height: 19px;
    background: var(--blush);
  }

  .summary .sub {
    height: 16px;
    background: var(--wash);
  }

  .summary .sub th,
  .summary .bar th {
    border-bottom: 0;
  }

  .summary th:first-child,
  .summary th[scope='row'],
  .summary .accent {
    padding-left: 4px;
    text-align: left;
  }

  .summary th[scope='row'] {
    border-right: 1px solid var(--rule);
  }

  .summary .accent {
    color: var(--orange);
    font-weight: 400;
  }

  .summary-right table {
    height: 191px;
  }

  .summary .strong td {
    color: var(--ink);
    font-weight: 500;
  }

  .underwriting-app .actions {
    padding: 7px 10px 8px;
  }

  /* Portfolio creation */
  .creation-card {
    display: flex;
    flex-direction: column;
    align-items: stretch;
    left: 32.7%;
    top: 996px;
    width: 18.25%;
    padding: 10px 10px 0;
  }

  .creation-card h2 {
    font-size: 9px;
  }

  .creation-card .segmented {
    align-self: flex-start;
    margin: 11px 0 7px;
  }

  .creation-grid {
    display: grid;
    grid-template-columns: 1fr 1fr;
    gap: 8px 10px;
    margin-bottom: 8px;
  }

  .creation-grid select,
  .creation-grid input {
    height: 18px;
  }

  .tags {
    display: flex;
    align-items: center;
    height: 18px;
    padding-right: 5px;
    border: 1px solid var(--line);
    border-radius: 3px;
    color: var(--muted);
  }

  .tag {
    display: flex;
    align-items: center;
    gap: 3px;
    height: 16px;
    padding: 0 5px;
    background: var(--wash);
    color: var(--text);
    font-size: 9px;
  }

  .tag .icon,
  .chip .icon {
    width: 7px;
    height: 7px;
  }

  .tags input[type='text'] {
    flex: 1;
    height: 16px;
    border: 0;
  }

  .note {
    margin-top: 9px;
    padding: 6px 6px 12px;
    background: #faf8fc;
  }

  .note h3 {
    color: var(--orange);
    font-size: 8px;
  }

  .note p {
    color: var(--text);
    font-size: 9px;
    font-weight: 400;
    line-height: 11px;
  }

  .note table {
    width: 73%;
    margin: 9px 0 0 2px;
  }

  .note th,
  .note td {
    height: 17px;
    border-bottom: 1px solid var(--rule);
    background: #fff;
  }

  .note th {
    height: 20px;
    border-top: 1px solid var(--rule);
    background: none;
  }

  .note th + th,
  .note td + td {
    border-left: 1px solid var(--rule);
  }

  /* Transactions window */
  .transactions-app {
    left: 56.8%;
    top: 969px;
    min-height: 400px;
    border-radius: 14px 14px 0 0;
  }

  .transactions-app .panel {
    margin-top: 7px;
    border-radius: 6px 6px 0 0;
  }

  .transactions-app .panel h1 {
    padding: 8px 13px;
    font-size: 10px;
  }

  .toolbar {
    display: flex;
    align-items: center;
    gap: 6px;
    padding: 7px 8px 7px 12px;
  }

  .panel .toolbar {
    padding: 7px 8px 7px 15px;
  }

  .search {
    display: flex;
    align-items: center;
    gap: 6px;
    width: 136px;
    height: 18px;
    margin-right: auto;
    padding: 0 5px;
    border: 1px solid var(--line);
    border-radius: 3px;
    color: var(--muted);
  }

  .search input {
    min-width: 0;
    appearance: none;
    color: var(--text);
    font-size: 9px;
  }

  .search input::placeholder {
    color: var(--text);
  }

  .toolbar .btn {
    height: 18px;
  }

  .panel .toolbar .btn {
    background: none;
  }

  .chip {
    display: flex;
    align-items: center;
    gap: 3px;
    margin-right: 5px;
    color: var(--text);
    font-size: 9px;
  }

  .chip b {
    color: var(--ink);
    font-weight: 500;
  }

  .transactions-app thead tr {
    height: 21px;
    background: var(--wash);
  }

  .transactions-app .left {
    padding-left: 7px;
    text-align: left;
  }

  .transactions-app th.edge {
    border-left: 1px solid var(--line);
  }

  .scrim {
    position: absolute;
    inset: 0;
    background: rgb(0 0 0 / 30%);
  }

  .sheet {
    position: absolute;
    top: 93px;
    right: 0;
    bottom: 0;
    left: 0;
    overflow: hidden;
    border-radius: 6px 6px 0 0;
    background: #fff;
  }

  .sheet header {
    display: flex;
    align-items: center;
    gap: 11px;
    height: 34px;
    padding: 0 12px;
    border-bottom: 1px solid var(--rule);
  }

  .stages {
    display: flex;
    align-items: center;
    gap: 13px;
    padding: 7px 12px 8px;
    border-bottom: 1px solid var(--rule);
  }

  .stage {
    position: relative;
    flex: 1;
    height: 39px;
    padding: 1px 7px 0;
    border: 1px solid var(--rule);
    border-radius: 3px;
    text-align: left;
  }

  .stage + .stage::before {
    content: '';
    position: absolute;
    top: 18px;
    right: 100%;
    width: 13px;
    height: 1px;
    background: var(--line);
  }

  .stage.done {
    border-color: #8fd3c6;
    background: #e9fbf6;
  }

  .stage.current {
    border-color: #fae27c;
    background: #fef4cf;
  }

  .stage.idle {
    background: #fcfbfd;
    color: var(--muted);
  }

  .stage-name {
    display: flex;
    justify-content: space-between;
    font-size: 9px;
    font-weight: 500;
  }

  .idle .stage-name {
    font-weight: 400;
  }

  .stage-sub {
    display: flex;
    gap: 5px;
    margin-top: 1px;
    color: var(--text);
  }

  .idle .stage-sub,
  .done .stage-sub {
    color: var(--muted);
  }

  .sheet table {
    width: 104%;
    height: 161px;
  }

  .sheet .address {
    padding-left: 7px;
    border-right: 1px solid var(--rule);
    color: var(--ink);
    font-weight: 500;
    text-align: left;
  }

  .sheet .status {
    padding-left: 7px;
    color: #e39a1d;
    font-weight: 500;
    text-align: left;
  }
</style>
